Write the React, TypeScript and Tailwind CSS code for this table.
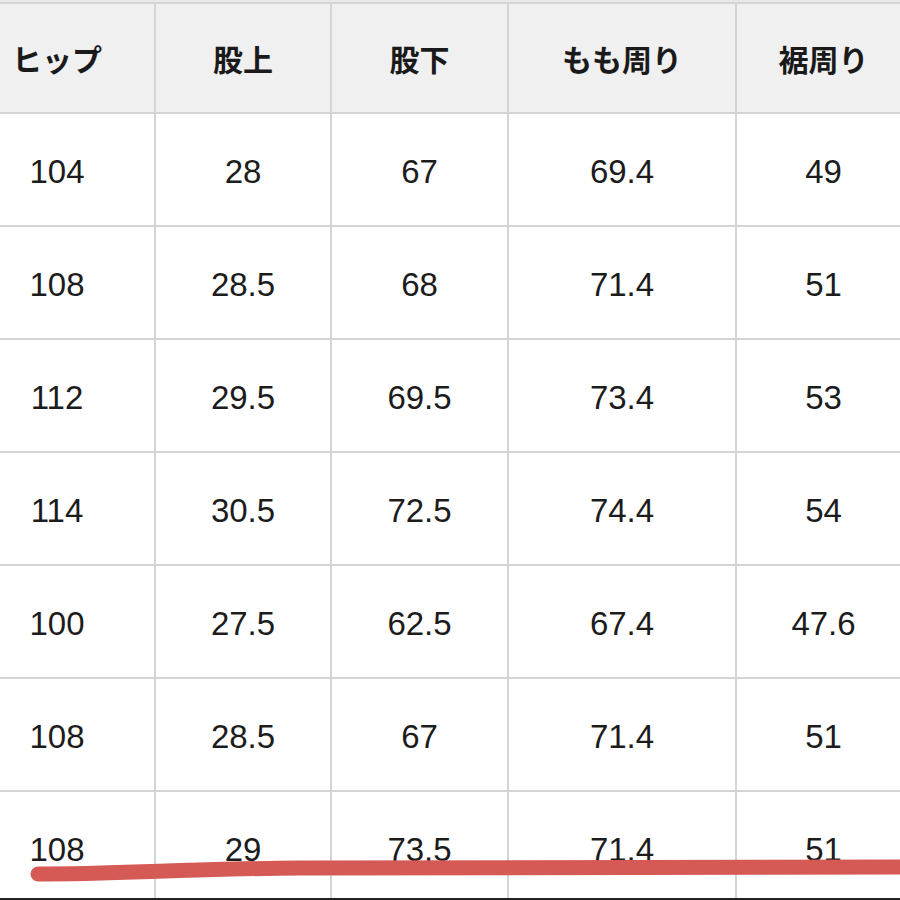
import React from "react";

const headers = ["ヒップ", "股上", "股下", "もも周り", "裾周り"];

const rows = [
  ["104", "28", "67", "69.4", "49"],
  ["108", "28.5", "68", "71.4", "51"],
  ["112", "29.5", "69.5", "73.4", "53"],
  ["114", "30.5", "72.5", "74.4", "54"],
  ["100", "27.5", "62.5", "67.4", "47.6"],
  ["108", "28.5", "67", "71.4", "51"],
  ["108", "29", "73.5", "71.4", "51"],
];

// widths include the 2px left border of cols 2-5
const colClass = [
  "w-[154px] shrink-0 pr-[40px]",
  "w-[176px] shrink-0 border-l-2 border-[#d4d4d4]",
  "w-[177px] shrink-0 border-l-2 border-[#d4d4d4]",
  "w-[228px] shrink-0 border-l-2 border-[#d4d4d4]",
  "flex-1 border-l-2 border-[#d4d4d4] pl-[10px]",
];

const App = () => {
  return (
    <div className="relative w-[900px] h-[900px] overflow-hidden bg-white font-['Liberation_Sans','Noto_Sans_CJK_JP',sans-serif]">
      <div className="h-[2px] bg-[#e8e8e8]" />
      {/* header */}
      <div className="flex h-[112px] bg-[#f0f0f0] border-y-2 border-[#d4d4d4] text-[30px] font-bold text-[#1a1a1a] font-['Noto_Sans_CJK_JP',sans-serif]">
        {headers.map((h, i) => (
          <div key={h} className={`${colClass[i]} flex items-center justify-center`}>
            {h}
          </div>
        ))}
      </div>

      {rows.map((r, ri) => (
        <div key={ri} className="flex h-[113px] border-b-2 border-[#d4d4d4] text-[33px] text-[#1c1c1c]">
          {r.map((c, ci) => (
            <div key={ci} className={`${colClass[ci]} flex items-center justify-center pt-[4px]`}>
              {c}
            </div>
          ))}
        </div>
      ))}

      {/* red marker underline */}
      <svg className="absolute left-0 top-0 pointer-events-none" width="900" height="900" viewBox="0 0 900 900">
        <path
          d="M38 874 C 120 874, 180 869, 300 868 L 910 867"
          fill="none"
          stroke="#d55a55"
          strokeWidth="15"
          strokeLinecap="round"
        />
      </svg>

      <div className="absolute left-0 bottom-0 w-full h-[2px] bg-[#222]" />
    </div>
  );
};

export default App;
